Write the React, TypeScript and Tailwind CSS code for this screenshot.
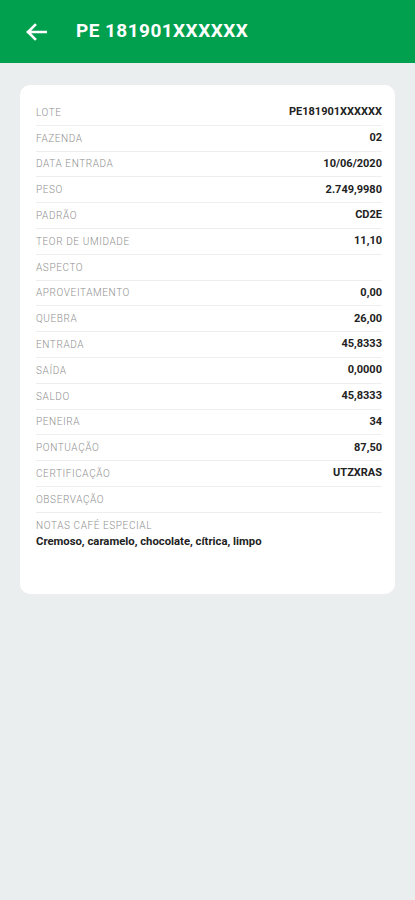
import React from "react";

const rows: [string, string][] = [
  ["LOTE", "PE181901XXXXXX"],
  ["FAZENDA", "02"],
  ["DATA ENTRADA", "10/06/2020"],
  ["PESO", "2.749,9980"],
  ["PADRÃO", "CD2E"],
  ["TEOR DE UMIDADE", "11,10"],
  ["ASPECTO", ""],
  ["APROVEITAMENTO", "0,00"],
  ["QUEBRA", "26,00"],
  ["ENTRADA", "45,8333"],
  ["SAÍDA", "0,0000"],
  ["SALDO", "45,8333"],
  ["PENEIRA", "34"],
  ["PONTUAÇÃO", "87,50"],
  ["CERTIFICAÇÃO", "UTZXRAS"],
  ["OBSERVAÇÃO", ""],
];

export default function App() {
  return (
    <div
      className="min-h-[900px] w-full bg-[#ebeeee]"
      style={{ fontFamily: "Roboto, 'Liberation Sans', sans-serif" }}
    >
      <div className="flex h-[63px] items-center bg-[#01a04f] pl-[25px]">
        <svg width="22" height="18" viewBox="0 0 22 18" fill="none" className="mr-[29px]">
          <path d="M21 9H3M10 2L3 9l7 7" stroke="white" strokeWidth="2.6" strokeLinecap="square" />
        </svg>
        <span className="text-[19px] font-bold tracking-[0.45px] text-white">PE 181901XXXXXX</span>
      </div>
      <div className="mx-5 mt-[22px] rounded-[10px] bg-white pb-[43px] pl-4 pr-[13px] pt-[15px]">
        {rows.map(([label, value]) => (
          <div
            key={label}
            className="flex h-[25.8px] items-center justify-between border-b border-[#eeeeee]"
          >
            <span className="text-[10px] font-light tracking-[0.6px] text-[#8f8f8f]">{label}</span>
            <span className="text-[11px] font-bold text-[#222222]">{value}</span>
          </div>
        ))}
        <div className="pt-[5px]">
          <div className="text-[10px] font-light tracking-[0.6px] text-[#8f8f8f]">NOTAS CAFÉ ESPECIAL</div>
          <div className="mt-[1px] text-[11.3px] font-bold text-[#222222]">
            Cremoso, caramelo, chocolate, cítrica, limpo
          </div>
        </div>
      </div>
    </div>
  );
}
